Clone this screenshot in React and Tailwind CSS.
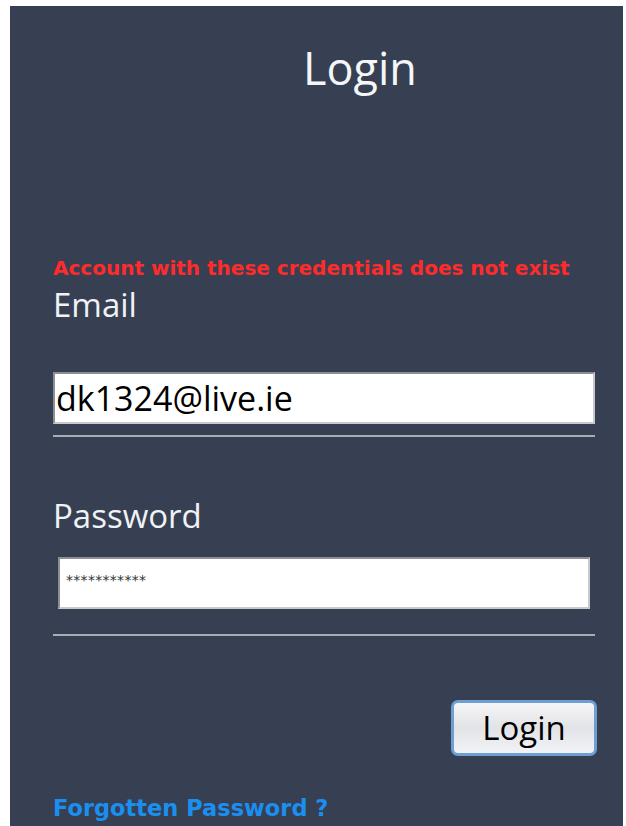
export default function App() {
  return (
    <div className="w-[626px] h-[826px] bg-white pl-[10px] pt-[6px] pr-[3px] overflow-hidden">
      <div className="h-full bg-[#364052] pl-[43px] pr-[28px] flex flex-col" style={{ fontFamily: '"Open Sans", sans-serif' }}>
        <h1 className="mt-[32px] text-center pl-[72px] text-[45px] leading-[60px] text-[#f4f6f8]">Login</h1>

        <p
          className="mt-[157px] text-[20px] leading-[26px] font-bold text-[#ff2b2b]"
          style={{ fontFamily: '"DejaVu Sans", sans-serif' }}
        >
          Account with these credentials does not exist
        </p>

        <label className="mt-[4px] text-[33px] leading-[40px] text-[#f0f2f5]">Email</label>
        <div className="mt-[47px] h-[52px] bg-white border-2 border-t-[#8d8f93] border-l-[#8d8f93] border-r-[#c8c9cc] border-b-[#c8c9cc] flex items-center px-[1px]">
          <span className="text-[34px] leading-none text-black">dk1324@live.ie</span>
        </div>
        <div className="mt-[11px] h-[2px] bg-[#a9adb5]" />

        <label className="mt-[59px] text-[33px] leading-[40px] text-[#f0f2f5]">Password</label>
        <div className="mt-[21px] mx-[5px] h-[52px] bg-white border-2 border-t-[#8d8f93] border-l-[#8d8f93] border-r-[#c8c9cc] border-b-[#c8c9cc] flex items-center px-[6px] pb-[6px]">
          <span className="text-[14px] leading-none text-[#333] tracking-[0.3px]" style={{ fontFamily: '"DejaVu Sans", sans-serif' }}>
            ***********
          </span>
        </div>
        <div className="mt-[25px] h-[2px] bg-[#a9adb5]" />

        <div className="mt-[64px] flex justify-end -mr-[2px]">
          <button className="w-[146px] h-[56px] rounded-[7px] border-[3px] border-[#6f9fd0] bg-gradient-to-b from-[#f6f6f8] via-[#e2e3e6] to-[#f2f3f6] text-[33px] text-black">
            Login
          </button>
        </div>

        <a
          href="#"
          className="mt-[36px] text-[22.5px] leading-[32px] font-bold text-[#1a8ff0]"
          style={{ fontFamily: '"DejaVu Sans", sans-serif' }}
        >
          Forgotten Password ?
        </a>
      </div>
    </div>
  );
}
